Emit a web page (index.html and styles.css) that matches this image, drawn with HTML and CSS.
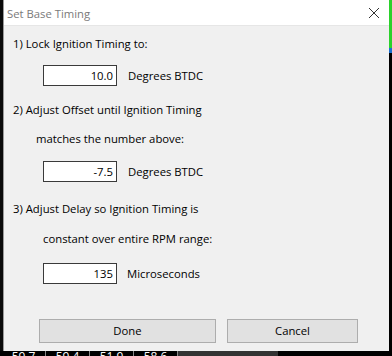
FILE: index.html
```html
<!DOCTYPE html>
<html>
<head>
<meta charset="utf-8">
<link rel="stylesheet" href="styles.css">
</head>
<body>
<div class="screen">
  <div class="dialog">
    <div class="titlebar">
      <span class="title">Set Base Timing</span>
      <svg class="close" width="12" height="12" viewBox="0 0 12 12"><path d="M1 1 L11 11 M11 1 L1 11" stroke="#333" stroke-width="1"/></svg>
    </div>
    <div class="body">
      <div class="line l1">1) Lock Ignition Timing to:</div>
      <div class="field-row r1"><div class="input">10.0</div><span class="unit">Degrees BTDC</span></div>
      <div class="line l2">2) Adjust Offset until Ignition Timing</div>
      <div class="line l3 ind1">matches the number above:</div>
      <div class="field-row r2"><div class="input">-7.5</div><span class="unit">Degrees BTDC</span></div>
      <div class="line l4">3) Adjust Delay so Ignition Timing is</div>
      <div class="line l5 ind2">constant over entire RPM range:</div>
      <div class="field-row r3"><div class="input">135</div><span class="unit unit2">Microseconds</span></div>
      <div class="buttons">
        <div class="btn done">Done</div>
        <div class="btn cancel">Cancel</div>
      </div>
    </div>
  </div>
  <div class="side"></div>
</div>
<div class="bottom">
  <span class="cell">59.7</span><span class="cell">59.4</span><span class="cell">51.9</span><span class="cell">58.6</span><span class="cell dark"></span>
</div>
</body>
</html>
```

FILE: styles.css
```css
html, body {
  margin: 0;
  padding: 0;
  background: #000;
  width: 392px;
  height: 356px;
  overflow: hidden;
  font-family: "Open Sans", "Noto Sans", sans-serif;
  font-size: 11.3px;
  color: #000;
}
.screen {
  display: flex;
  height: 351px;
  background: #0a0a0a;
  padding-left: 3px;
}
.dialog {
  width: 386px;
  height: 351px;
  background: #f0f0f0;
  display: flex;
  flex-direction: column;
  box-sizing: border-box;
  border-left: 1px solid #9a9a9a;
}
.titlebar {
  height: 26px;
  background: #fff;
  display: flex;
  align-items: center;
  justify-content: space-between;
  padding: 0 9px 0 3px;
  border-bottom: 1px solid #e6e6e6;
  box-sizing: border-box;
}
.title {
  color: #7a7a7a;
  font-size: 11.3px;
  margin-top: 1px;
}
.close {
  display: block;
}
.body {
  display: flex;
  flex-direction: column;
  padding-left: 9px;
}
.line {
  height: 16px;
  line-height: 16px;
  white-space: nowrap;
}
.l1 { margin-top: 10px; }
.l2 { margin-top: 16px; }
.l3 { margin-top: 13px; }
.l4 { margin-top: 19px; }
.l5 { margin-top: 14px; }
.ind1 { padding-left: 23px; }
.ind2 { padding-left: 30px; }
.field-row {
  display: flex;
  align-items: center;
  padding-left: 30px;
  height: 21px;
}
.r1 { margin-top: 13px; }
.r2 { margin-top: 14px; }
.r3 { margin-top: 16px; }
.input {
  width: 74px;
  height: 21px;
  box-sizing: border-box;
  border: 1px solid #3a3a3a;
  background: #fff;
  text-align: right;
  padding-right: 3px;
  line-height: 19px;
}
.unit { margin-left: 11px; }
.unit2 { margin-left: 10px; }
.buttons {
  display: flex;
  margin-top: 35px;
  padding-left: 26px;
  gap: 11px;
}
.btn {
  height: 24px;
  box-sizing: border-box;
  border: 1px solid #adadad;
  background: #e1e1e1;
  text-align: center;
  line-height: 22px;
}
.done { width: 177px; }
.cancel { width: 131px; }
.side {
  width: 3px;
  background: linear-gradient(#2bd12b 0 48px, #1a6fd0 48px 53px, #000 53px);
}
.bottom {
  height: 5px;
  display: flex;
  background: #000;
  overflow: hidden;
  padding-left: 2px;
  font-size: 12px;
  color: #fff;
}
.cell {
  width: 44px;
  border-right: 1px solid #888;
  line-height: 5px;
  padding-top: 3px;
  box-sizing: border-box;
  text-align: center;
}
.cell.dark {
  width: 100px;
  background: #333;
  border: none;
}
```
